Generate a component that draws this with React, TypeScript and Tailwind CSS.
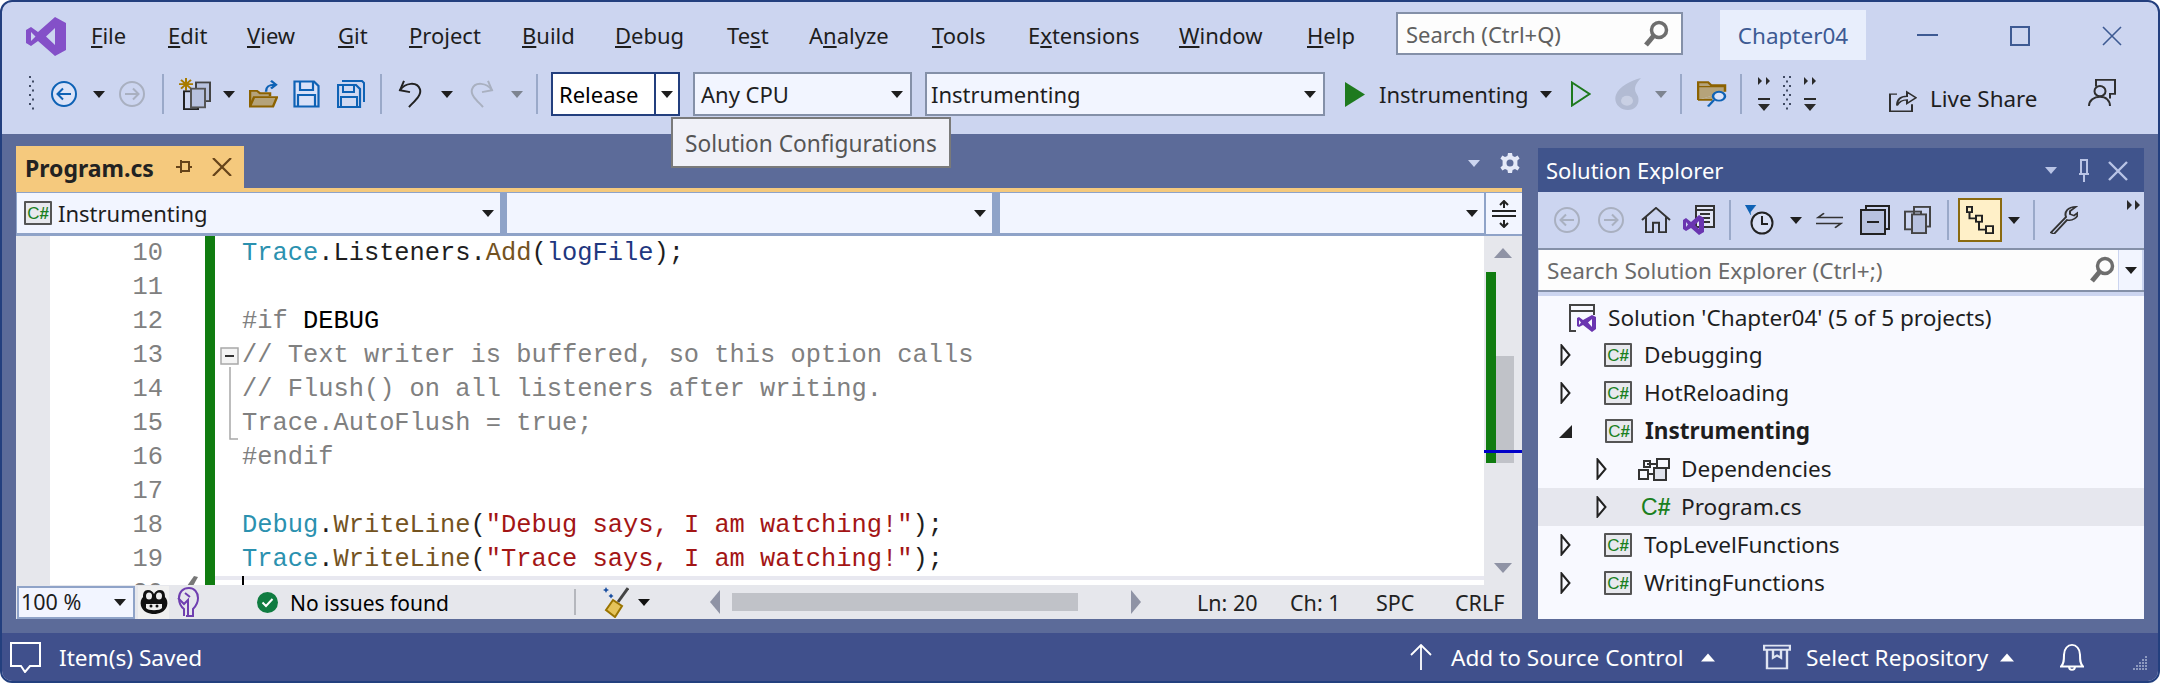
import React from "react";

const Caret = ({ c = "#1e1e1e", up = false }: { c?: string; up?: boolean }) => (
  <svg width="14" height="9" viewBox="0 0 14 9"><path d={up ? "M7 0.5L14 8.5H0Z" : "M1 1H13L7 8Z"} fill={c} /></svg>
);
const CircleArrow = ({ c, dir, f = "none" }: { c: string; dir: "l" | "r"; f?: string }) => (
  <svg width="26" height="26" viewBox="0 0 26 26" fill={f} stroke={c} strokeWidth="2">
    <circle cx="13" cy="13" r="12" />
    <path d={dir === "l" ? "M20 13H7M12 7.5L6.5 13L12 18.5" : "M6 13H19M14 7.5L19.5 13L14 18.5"} fill="none" />
  </svg>
);
const Sep = ({ cls }: { cls: string }) => <div className={`w-[2px] shrink-0 bg-[#9aa9c9] ${cls}`} />;
const Grip = ({ cols = 2, rows = 8 }: { cols?: number; rows?: number }) => (
  <svg width={cols * 3 + 1} height={rows * 4.5} viewBox={`0 0 ${cols * 3 + 1} ${rows * 4.5}`}>
    {Array.from({ length: rows }).map((_, r) =>
      Array.from({ length: cols }).map((_, c) =>
        (r + c) % 2 === 0 ? <rect key={`${r}-${c}`} x={c * 3 + 1} y={r * 4.5} width="2" height="2" fill="#3f4a63" /> : null
      )
    )}
  </svg>
);
const Vs = ({ size = 40, c = "#8450c8" }: { size?: number; c?: string }) => (
  <svg width={size} height={size} viewBox="0 0 40 40">
    <path fillRule="evenodd" fill={c} d="M29 0L40 6V33L29 39L12 24L5 29L0 26V13L5 10L12 15ZM29 11L20 19.5L29 28ZM5 15V24L9.5 19.5Z" />
  </svg>
);
const Search = ({ c = "#6e6e6e" }: { c?: string }) => (
  <svg width="26" height="28" viewBox="0 0 26 28" fill="none">
    <circle cx="16" cy="10" r="7.5" stroke={c} strokeWidth="3.5" />
    <path d="M10.5 16L3 25" stroke={c} strokeWidth="5" />
  </svg>
);
const Cs = () => (
  <div className="flex h-[24px] w-[28px] shrink-0 items-center justify-center rounded-[1px] border-2 border-[#555] bg-[#e8e9ee] font-['Liberation_Sans',sans-serif] text-[17px] leading-none text-[#1a8020]">
    C<span className="font-bold">#</span>
  </div>
);
const Tri = () => (
  <svg width="11" height="22" viewBox="0 0 11 22"><path d="M1.5 1.5L9.5 11L1.5 20.5Z" fill="#f8f9ff" stroke="#222" strokeWidth="2" /></svg>
);

const menu: [string, string, string, string][] = [
  ["", "F", "ile", "w-[77px]"],
  ["", "E", "dit", "w-[79px]"],
  ["", "V", "iew", "w-[91px]"],
  ["", "G", "it", "w-[71px]"],
  ["", "P", "roject", "w-[113px]"],
  ["", "B", "uild", "w-[93px]"],
  ["", "D", "ebug", "w-[112px]"],
  ["Te", "s", "t", "w-[82px]"],
  ["A", "n", "alyze", "w-[123px]"],
  ["", "T", "ools", "w-[96px]"],
  ["E", "x", "tensions", "w-[151px]"],
  ["", "W", "indow", "w-[128px]"],
  ["", "H", "elp", "w-[89px]"],
];

const T = "text-[#2b91af]";
const M = "text-[#74531f]";
const V = "text-[#1f377f]";
const S = "text-[#a31515]";
const K = "text-[#1e1e1e]";

const code: [string, React.ReactNode][] = [
  ["10", <><span className={T}>Trace</span><span className={K}>.Listeners.</span><span className={M}>Add</span><span className={K}>(</span><span className={V}>logFile</span><span className={K}>);</span></>],
  ["11", ""],
  ["12", <><span className="text-[#808080]">#if </span><span className="text-black">DEBUG</span></>],
  ["13", <span className="text-[#808080]">// Text writer is buffered, so this option calls</span>],
  ["14", <span className="text-[#808080]">// Flush() on all listeners after writing.</span>],
  ["15", <span className="text-[#808080]">Trace.AutoFlush = true;</span>],
  ["16", <span className="text-[#808080]">#endif</span>],
  ["17", ""],
  ["18", <><span className={T}>Debug</span><span className={K}>.</span><span className={M}>WriteLine</span><span className={K}>(</span><span className={S}>"Debug says, I am watching!"</span><span className={K}>);</span></>],
  ["19", <><span className={T}>Trace</span><span className={K}>.</span><span className={M}>WriteLine</span><span className={K}>(</span><span className={S}>"Trace says, I am watching!"</span><span className={K}>);</span></>],
];

const Row = ({ cls = "", arrow, icon, children }: { cls?: string; arrow: React.ReactNode; icon: React.ReactNode; children: React.ReactNode }) => (
  <div className={`flex h-[38px] items-center ${cls}`}>
    {arrow}
    {icon}
    {children}
  </div>
);

export default function App() {
  return (
    <div className="h-[683px] w-[2160px] overflow-hidden bg-white font-['Noto_Sans',sans-serif]">
      <div className="flex h-[683px] w-[2160px] flex-col overflow-hidden rounded-[12px] border-2 border-[#233f7e] bg-[#ccd5f0] text-[22px] text-[#1e1e1e]">
        {/* Menu row */}
        <div className="flex h-[66px] shrink-0 items-center">
          <div className="ml-[24px] mt-[4px] w-[65px] shrink-0"><Vs /></div>
          {menu.map(([a, u, b, w]) => (
            <div key={u + b} className={`shrink-0 ${w}`}>
              {a}<span className="underline underline-offset-2">{u}</span>{b}
            </div>
          ))}
          <div className="mb-[3px] flex h-[43px] w-[287px] shrink-0 items-center justify-between border-2 border-[#8490a8] bg-[#fdfdfd] pl-[8px] pr-[12px] text-[#606060]">
            <span className="pt-[2px]">Search (Ctrl+Q)</span>
            <Search />
          </div>
          <div className="ml-[37px] flex h-[50px] w-[146px] shrink-0 items-center justify-center bg-[#e8eefc] pt-[2px] text-[22.5px] text-[#3d5a93]">Chapter04</div>
          <div className="ml-[51px] h-[2px] w-[21px] shrink-0 bg-[#3d5a93]" />
          <div className="mt-[2px] ml-[72px] h-[20px] w-[20px] shrink-0 border-2 border-[#3d5a93]" />
          <svg className="mt-[2px] ml-[72px] shrink-0" width="20" height="20" viewBox="0 0 20 20" stroke="#3d5a93" strokeWidth="1.6"><path d="M1 1L19 19M19 1L1 19" /></svg>
        </div>

        {/* Tool row */}
        <div className="relative flex h-[66px] shrink-0 items-center pb-[14px]">
          <div className="ml-[26px] w-[6px] shrink-0"><Grip /></div>
          <div className="ml-[17px] shrink-0"><CircleArrow c="#0e62b5" dir="l" f="#dbe3f8" /></div>
          <div className="ml-[15px] shrink-0"><Caret /></div>
          <div className="ml-[13px] shrink-0"><CircleArrow c="#a9b0c0" dir="r" /></div>
          <Sep cls="ml-[17px] h-[40px]" />
          <svg className="ml-[15px] shrink-0" width="32" height="32" viewBox="0 0 32 36" preserveAspectRatio="none" fill="none">
            <path d="M7 0V14M0 7H14M2 2L12 12M12 2L2 12" stroke="#a87b00" strokeWidth="2" />
            <rect x="17" y="5" width="14" height="21" fill="#b8c2df" stroke="#444" strokeWidth="2" />
            <rect x="5" y="15" width="14" height="20" fill="none" stroke="#222" strokeWidth="2" />
            <rect x="12" y="12" width="14" height="21" fill="#b8c2df" stroke="#555" strokeWidth="2" />
          </svg>
          <div className="ml-[11px] shrink-0"><Caret /></div>
          <svg className="ml-[13px] shrink-0" width="29" height="28" viewBox="0 0 29 36" preserveAspectRatio="none" fill="none">
            <path d="M1 34V14H8L11 17H21V21" fill="#b5a37a" stroke="#8c6200" strokeWidth="2.5" />
            <path d="M1 34L5 22H28L24 34Z" fill="#b5a37a" stroke="#8c6200" strokeWidth="2.5" />
            <path d="M17 15C17 8 20 6 26 6M22 1L27 6L22 11" stroke="#0e62b5" strokeWidth="2.5" />
          </svg>
          <svg className="ml-[15px] shrink-0" width="27" height="28" viewBox="0 0 27 28" fill="none" stroke="#0e62b5" strokeWidth="2.2">
            <path d="M1.5 1.5H21L25.5 6V26.5H1.5Z" fill="#d9e1f8" />
            <path d="M7 1.5V10H20V1.5M5 26.5V15H22V26.5" />
          </svg>
          <svg className="ml-[17px] shrink-0" width="28" height="28" viewBox="0 0 28 28" fill="none" stroke="#0e62b5" strokeWidth="2">
            <path d="M5 1H25L27 3V22" />
            <path d="M1 5H19L23 9V27H1Z" fill="#d0d9f2" strokeWidth="2.2" />
            <path d="M6 5V12H17V5M4 27V17H20V27" />
          </svg>
          <Sep cls="ml-[15px] h-[40px]" />
          <svg className="ml-[16px] shrink-0" width="25" height="28" viewBox="0 0 25 30" preserveAspectRatio="none" fill="none" stroke="#222" strokeWidth="2">
            <path d="M6 1L2 11L12 13" />
            <path d="M2 11C7 3 19 1 22 10C24 17 15 24 11 29" />
          </svg>
          <div className="ml-[17px] shrink-0"><Caret /></div>
          <svg className="ml-[15px] shrink-0" width="25" height="28" viewBox="0 0 25 30" preserveAspectRatio="none" fill="none" stroke="#a9b0c0" strokeWidth="2">
            <path d="M19 1L23 11L13 13" />
            <path d="M23 11C18 3 6 1 3 10C1 17 10 24 14 29" />
          </svg>
          <div className="ml-[16px] shrink-0"><Caret c="#7d8490" /></div>
          <Sep cls="ml-[12px] h-[40px]" />
          <div className="ml-[13px] flex h-[44px] w-[129px] shrink-0 items-center border-2 border-[#233f7e] bg-white text-black">
            <span className="w-[101px] shrink-0 pl-[6px]">Release</span>
            <div className="flex h-full flex-1 items-center justify-center border-l-2 border-[#233f7e]"><Caret /></div>
          </div>
          <div className="ml-[13px] flex h-[44px] w-[219px] shrink-0 items-center justify-between border-2 border-[#8490a8] bg-[#f2f5ff] pl-[6px] pr-[6px]">
            <span>Any CPU</span><Caret />
          </div>
          <div className="ml-[13px] flex h-[44px] w-[400px] shrink-0 items-center justify-between border-2 border-[#8490a8] bg-[#f2f5ff] pl-[4px] pr-[6px]">
            <span>Instrumenting</span><Caret />
          </div>
          <svg className="ml-[20px] shrink-0" width="20" height="25" viewBox="0 0 20 25"><path d="M0 0L20 12.5L0 25Z" fill="#1e7a1e" /></svg>
          <span className="ml-[14px] w-[150px] shrink-0">Instrumenting</span>
          <div className="ml-[10px] shrink-0"><Caret /></div>
          <svg className="ml-[18px] shrink-0" width="20" height="26" viewBox="0 0 20 26"><path d="M1 1.5L18.5 13L1 24.5Z" fill="none" stroke="#1e7a1e" strokeWidth="2" /></svg>
          <svg className="ml-[23px] shrink-0" width="28" height="32" viewBox="0 0 28 38" preserveAspectRatio="none">
            <path d="M27 0C17 3 5 10 2 20C-1 30 6 38 14 38C22 38 26 30 24 22C23 19 21 17 21 13C21 8 24 4 27 0Z" fill="#b2bbd3" />
            <circle cx="13" cy="27" r="6" fill="#c9d0e4" />
          </svg>
          <div className="ml-[12px] shrink-0"><Caret c="#7d8490" /></div>
          <Sep cls="ml-[12px] h-[40px]" />
          <svg className="ml-[15px] shrink-0" width="30" height="28" viewBox="0 0 30 38" preserveAspectRatio="none" fill="none">
            <path d="M1 27V3H11L14 7H28V16" fill="#b5a37a" stroke="#8c6200" strokeWidth="2.5" />
            <path d="M1 27H16V16H28" fill="#b5a37a" />
            <path d="M1 27H15" stroke="#8c6200" strokeWidth="2.5" />
            <path d="M1 9H28" stroke="#8c6200" strokeWidth="2" />
            <circle cx="22" cy="22" r="6" stroke="#0e62b5" strokeWidth="2.5" fill="#dbe3f8" />
            <path d="M17 27L11 36" stroke="#0e62b5" strokeWidth="2.5" />
          </svg>
          <Sep cls="ml-[13px] h-[40px]" />
          <div className="ml-[16px] flex h-[36px] w-[58px] shrink-0 items-center justify-between">
            <svg width="12" height="36" viewBox="0 0 12 36"><path d="M0 1L4 5L0 9ZM8 1L12 5L8 9ZM0 22H12V24H0ZM0 28H12L6 35Z" fill="#2a2a2a" /></svg>
            <Grip cols={3} rows={8} />
            <svg width="12" height="36" viewBox="0 0 12 36"><path d="M0 1L4 5L0 9ZM8 1L12 5L8 9ZM0 22H12V24H0ZM0 28H12L6 35Z" fill="#2a2a2a" /></svg>
          </div>
          <svg className="ml-[73px] mt-[10px] shrink-0" width="28" height="25" viewBox="0 0 28 35" preserveAspectRatio="none" fill="none" stroke="#2f2f2f" strokeWidth="2">
            <path d="M8 10H1V34H23V24" />
            <path d="M8 26C8 16 12 13 18 13V7L27 15L18 23V18C13 18 10 21 8 26Z" fill="#ccd5f0" />
          </svg>
          <span className="ml-[13px] mt-[10px] w-[107px] shrink-0 whitespace-nowrap text-[22.4px]">Live Share</span>
          <svg className="ml-[51px] mt-[-2px] shrink-0" width="28" height="28" viewBox="0 0 28 30" preserveAspectRatio="none" fill="none" stroke="#2f2f2f" strokeWidth="2">
            <path d="M8 8V1H27V16H22V21" />
            <circle cx="12" cy="13" r="5.5" fill="#ccd5f0" />
            <path d="M1 29C1 23 6 19 12 19C18 19 22 23 22 29" fill="#ccd5f0" />
          </svg>

          {/* Tooltip */}
          <div className="absolute left-[669px] top-[49px] z-10 flex h-[51px] w-[280px] items-center border-2 border-[#7a7a7a] bg-[#f0f1f8] pl-[12px] pt-[3px] text-[22.7px] text-[#555]">
            Solution Configurations
          </div>
        </div>

        {/* Main */}
        <div className="flex h-[499px] shrink-0 gap-[16px] bg-[#5c6b99] pl-[14px] pr-[14px]">
          {/* Editor column */}
          <div className="flex h-full w-[1506px] shrink-0 flex-col pt-[12px]">
            <div className="flex h-[42px] shrink-0 items-stretch">
              <div className="flex w-[228px] items-center bg-[#f5c97d] pl-[9px] text-[23px] font-bold text-[#222]">
                <span className="w-[142px] shrink-0 pt-[3px]">Program.cs</span>
                <svg className="ml-[9px] shrink-0" width="16" height="16" viewBox="0 0 16 16" fill="none" stroke="#66441a" strokeWidth="2">
                  <path d="M0 8H5M5 3H13V12H5ZM13 8H16M5 1V14" />
                </svg>
                <svg className="ml-[20px] shrink-0" width="20" height="18" viewBox="0 0 20 18" stroke="#66441a" strokeWidth="2.2"><path d="M1 0L19 18M19 0L1 18" /></svg>
              </div>
              <div className="ml-auto flex items-center pb-[8px]">
                <Caret c="#ccd5f0" />
                <svg className="ml-[19px] mr-[2px]" width="20" height="20" viewBox="0 0 20 20">
                  <path fillRule="evenodd" fill="#e4e9f8" d="M8 0H12L12.6 3L15 4L17.6 2.4L19.6 5.4L17.4 7.6V12.4L19.6 14.6L17.6 17.6L15 16L12.6 17L12 20H8L7.4 17L5 16L2.4 17.6L.4 14.6L2.6 12.4V7.6L.4 5.4L2.4 2.4L5 4L7.4 3ZM10 6.5A3.5 3.5 0 1 0 10 13.5A3.5 3.5 0 1 0 10 6.5Z" />
                </svg>
              </div>
            </div>
            <div className="h-[4px] shrink-0 bg-[#f5c97d]" />
            <div className="flex h-[44px] shrink-0 bg-[#8fa3c8] pt-[1px]">
              <div className="ml-[1px] flex h-[40px] w-[483px] shrink-0 items-center bg-[#f2f5ff] pl-[7px] pr-[5px]">
                <Cs />
                <span className="ml-[6px] flex-1 pt-[1px]">Instrumenting</span>
                <Caret />
              </div>
              <div className="ml-[7px] flex h-[40px] w-[485px] shrink-0 items-center justify-end bg-[#f2f5ff] pr-[5px]"><Caret /></div>
              <div className="ml-[8px] flex h-[40px] w-[484px] shrink-0 items-center justify-end bg-[#f2f5ff] pr-[5px]"><Caret /></div>
              <div className="ml-[2px] flex h-[41px] w-[36px] shrink-0 items-center justify-center bg-[#f2f5ff]">
                <svg width="24" height="28" viewBox="0 0 24 28" fill="none" stroke="#222" strokeWidth="2">
                  <path d="M0 11H24M0 16H24M12 1V8M8 5L12 1L16 5M12 20V27M8 23L12 27L16 23" />
                </svg>
              </div>
            </div>
            {/* Editor body */}
            <div className="flex h-[349px] shrink-0 overflow-hidden bg-white font-['Liberation_Mono',monospace] text-[25.4px]">
              <div className="w-[34px] shrink-0 bg-[#e6e7ec]" />
              <div className="relative flex-1 overflow-hidden">
                <div className="absolute left-[155px] top-0 h-full w-[10px] bg-[#107c10]" />
                <svg className="absolute left-[170px] top-[111px]" width="19" height="94" viewBox="0 0 19 94" fill="none" stroke="#a8a8a8" strokeWidth="1.5">
                  <rect x="1" y="1" width="17" height="16" fill="#f4f4f4" />
                  <path d="M5 9H14" stroke="#333" strokeWidth="2" />
                  <path d="M10 20V92H18" />
                </svg>
                {code.map(([n, c]) => (
                  <div key={n} className="flex h-[34px] items-center whitespace-pre pt-[3px]">
                    <span className="w-[113px] shrink-0 text-right text-[#808080]">{n}</span>
                    <span className="ml-[79px]">{c}</span>
                  </div>
                ))}
                <div className="relative flex h-[34px] items-center pt-[3px]">
                  <span className="w-[113px] shrink-0 text-right text-[#808080]">20</span>
                  <div className="absolute left-[165px] right-0 top-0 h-[4px] bg-[#e8e8f0]" />
                  <div className="absolute left-[192px] top-0 h-[20px] w-[2px] bg-black" />
                  <svg className="absolute left-[137px] top-0" width="11" height="10" viewBox="0 0 11 10"><path d="M7 0L11 1L6 10H0Z" fill="#777" /></svg>
                </div>
              </div>
              <div className="relative w-[38px] shrink-0 bg-[#e6e7ec]">
                <svg className="ml-[10px] mt-[12px]" width="18" height="10" viewBox="0 0 18 10"><path d="M9 0L18 10H0Z" fill="#8f93a5" /></svg>
                <div className="ml-[2px] mt-[14px] flex">
                  <div className="h-[191px] w-[10px] bg-[#107c10]" />
                  <div className="mt-[84px] h-[107px] w-[18px] bg-[#c0c2c8]" />
                </div>
                <div className="absolute left-0 right-0 top-[214px] h-[3px] bg-[#0000c8]" />
                <svg className="absolute left-[10px] top-[327px]" width="18" height="10" viewBox="0 0 18 10"><path d="M0 0H18L9 10Z" fill="#8f93a5" /></svg>
              </div>
            </div>
            {/* Editor status */}
            <div className="flex h-[34px] shrink-0 items-center bg-[#e6e7ec] text-[21.5px] leading-none">
              <div className="ml-[1px] flex h-[33px] w-[118px] shrink-0 items-center justify-between border-2 border-[#8fa3c8] bg-[#f2f5ff] pl-[2px] pr-[6px]">
                <span>100 %</span><Caret />
              </div>
              <div className="ml-[3px] flex h-[33px] w-[31px] shrink-0 items-center justify-center bg-[#f0f0f0]">
                <svg width="28" height="26" viewBox="0 0 28 26">
                  <path d="M8 1C4 1 3 4 3 8C1 10 0 13 1 17C3 23 9 25 14 25C19 25 25 23 27 17C28 13 27 10 25 8C25 4 24 1 20 1C17 1 15 3 14 5C13 3 11 1 8 1Z" fill="#111" />
                  <ellipse cx="9" cy="7" rx="3" ry="3.5" fill="#eee" />
                  <ellipse cx="19" cy="7" rx="3" ry="3.5" fill="#eee" />
                  <path d="M6 15H22V19C20 22 8 22 6 19Z" fill="#eee" />
                  <circle cx="11" cy="17" r="1.5" fill="#111" />
                  <circle cx="17" cy="17" r="1.5" fill="#111" />
                </svg>
              </div>
              <svg className="ml-[8px] shrink-0" width="22" height="32" viewBox="0 0 22 32" fill="none" stroke="#6f3fb0" strokeWidth="2">
                <path d="M7 30V23C3 20 2 16 2 12C2 6 6 2 12 2C17 2 21 6 21 12C21 16 19 20 16 23V30H9" />
                <path d="M1 12L7 18L11 14L11 30M8 7L13 11" />
              </svg>
              <svg className="ml-[58px] shrink-0" width="21" height="21" viewBox="0 0 21 21">
                <circle cx="10.5" cy="10.5" r="10.5" fill="#107c41" />
                <path d="M5.5 10.5L9 14L15.5 7" fill="none" stroke="#fff" strokeWidth="2" />
              </svg>
              <span className="ml-[12px] w-[284px] shrink-0 whitespace-nowrap pt-[2px] text-[21px] text-black">No issues found</span>
              <div className="h-[26px] w-[2px] shrink-0 bg-[#b5b7bd]" />
              <svg className="ml-[27px] shrink-0" width="26" height="32" viewBox="0 0 26 32" fill="none">
                <path d="M2 3L3 1L4 3L6 4L4 5L3 7L2 5L0 4ZM7 9L8 7.5L9 9L10.5 10L9 11L8 12.5L7 11L5.5 10Z" fill="#1a4fa0" />
                <path d="M25 2L15 16" stroke="#444" strokeWidth="3" />
                <path d="M10 14L19 20L12 31L3 24Z" fill="#e5c35a" stroke="#9a7400" strokeWidth="2" />
              </svg>
              <div className="ml-[8px] shrink-0"><Caret c="#111" /></div>
              <svg className="ml-[59px] shrink-0" width="10" height="24" viewBox="0 0 10 24"><path d="M10 0V24L0 12Z" fill="#8f93a5" /></svg>
              <div className="ml-[12px] h-[18px] w-[346px] shrink-0 bg-[#c0c2c8]" />
              <svg className="ml-[53px] shrink-0" width="10" height="24" viewBox="0 0 10 24"><path d="M0 0V24L10 12Z" fill="#8f93a5" /></svg>
              <span className="ml-[56px] w-[93px] shrink-0 pt-[2px] text-[#222]">Ln: 20</span>
              <span className="w-[86px] shrink-0 pt-[2px] text-[#222]">Ch: 1</span>
              <span className="w-[79px] shrink-0 pt-[2px] text-[#222]">SPC</span>
              <span className="shrink-0 pt-[2px] text-[#222]">CRLF</span>
            </div>
          </div>

          {/* Solution Explorer */}
          <div className="flex h-full w-[606px] shrink-0 flex-col pb-[14px] pt-[14px]">
            <div className="flex h-[44px] shrink-0 items-center bg-[#40548c] pl-[8px] pt-[1px] text-white">
              <span className="w-[498px] shrink-0">Solution Explorer</span>
              <Caret c="#b9c4e6" />
              <svg className="ml-[20px]" width="12" height="24" viewBox="0 0 12 24" fill="none" stroke="#b9c4e6" strokeWidth="2"><path d="M1 15H11M3 1H9V15H3ZM6 15V23" /></svg>
              <svg className="ml-[18px]" width="20" height="20" viewBox="0 0 20 20" stroke="#b9c4e6" strokeWidth="2.4"><path d="M1 1L19 19M19 1L1 19" /></svg>
            </div>
            <div className="flex h-[56px] shrink-0 items-center bg-[#ccd5f0]">
              <div className="ml-[16px] shrink-0"><CircleArrow c="#a9b0c0" dir="l" /></div>
              <div className="ml-[18px] shrink-0"><CircleArrow c="#a9b0c0" dir="r" /></div>
              <svg className="ml-[17px] shrink-0" width="30" height="26" viewBox="0 0 30 28" preserveAspectRatio="none" fill="none" stroke="#333" strokeWidth="2"><path d="M1 14L15 1L29 14M5 11V27H12V17H18V27H25V11" /></svg>
              <svg className="ml-[12px] shrink-0" width="32" height="30" viewBox="0 0 32 30" fill="none">
                <rect x="13" y="1" width="18" height="21" fill="#e2e6f5" stroke="#333" strokeWidth="2" />
                <path d="M13 5H31M17 9H27M17 13H27M17 17H27" stroke="#333" strokeWidth="2" />
                <path fillRule="evenodd" fill="#6a35b0" d="M16 10L21 13V27L16 30L8 23L3 26L0 24V15L3 13L8 17ZM16 16L12 20L16 24ZM3 17V22L5 19.5Z" />
              </svg>
              <Sep cls="ml-[14px] h-[40px]" />
              <svg className="ml-[14px] shrink-0" width="29" height="30" viewBox="0 0 29 30" fill="none">
                <path d="M0 0H11L5.5 7V10" fill="#0e62b5" stroke="#0e62b5" strokeWidth="0.5" />
                <circle cx="17" cy="18" r="10.5" fill="#d9e0f5" stroke="#222" strokeWidth="2" />
                <path d="M17 11V19H23" stroke="#222" strokeWidth="2" />
              </svg>
              <div className="ml-[15px] shrink-0"><Caret /></div>
              <svg className="ml-[13px] shrink-0" width="27" height="19" viewBox="0 0 27 26" preserveAspectRatio="none" fill="none" stroke="#333" strokeWidth="2"><path d="M27 9H2L8 3M0 17H25L19 23" /></svg>
              <svg className="ml-[17px] shrink-0" width="30" height="30" viewBox="0 0 30 30" fill="none" stroke="#222" strokeWidth="2">
                <path d="M6 5V1H29V24H25" />
                <rect x="1" y="5" width="24" height="24" fill="#b8c2df" />
                <path d="M7 17H19" />
              </svg>
              <svg className="ml-[14px] shrink-0" width="27" height="28" viewBox="0 0 27 30" preserveAspectRatio="none" fill="none" stroke="#444" strokeWidth="2">
                <rect x="10" y="1" width="16" height="21" />
                <rect x="1" y="6" width="16" height="19" />
                <rect x="8" y="9" width="14" height="20" fill="#b8c2df" />
              </svg>
              <Sep cls="ml-[16px] h-[40px]" />
              <div className="ml-[9px] flex h-[44px] w-[44px] shrink-0 items-center justify-center border-2 border-[#8a6a10] bg-[#fff0c8]">
                <svg width="28" height="28" viewBox="0 0 28 32" preserveAspectRatio="none" fill="none" stroke="#222" strokeWidth="2">
                  <rect x="1" y="1" width="5" height="6" />
                  <rect x="10" y="11" width="6" height="7" />
                  <rect x="20" y="23" width="7" height="8" />
                  <path d="M3.5 7V14H10M13 18V27H20" />
                </svg>
              </div>
              <div className="ml-[5px] shrink-0"><Caret /></div>
              <Sep cls="ml-[12px] h-[40px]" />
              <svg className="ml-[15px] shrink-0" width="28" height="28" viewBox="0 0 28 38" preserveAspectRatio="none" fill="none">
                <path d="M1 36L16 15C14 8 18 1 26 1L20 7V11L24 13L28 9C28 16 22 21 17 19L4 38Z" fill="#ccd5f0" stroke="#333" strokeWidth="2" />
              </svg>
              <svg className="mb-[30px] ml-[49px] shrink-0" width="13" height="10" viewBox="0 0 13 10"><path d="M0 0L5 5L0 10ZM8 0L13 5L8 10Z" fill="#2a2a2a" /></svg>
            </div>
            <div className="flex h-[44px] shrink-0 items-stretch border-y-2 border-[#8490a8] bg-[#ccd5f0] pl-[1px] pr-[2px]">
              <div className="flex w-[579px] shrink-0 items-center justify-between bg-[#fdfdfd] pl-[8px] pr-[3px] text-[22.6px] text-[#6a6a6a]">
                <span className="pt-[2px]">Search Solution Explorer (Ctrl+;)</span>
                <Search />
              </div>
              <div className="ml-[1px] flex flex-1 items-center justify-center bg-[#f2f5ff]"><Caret /></div>
            </div>
            <div className="h-[4px] shrink-0 bg-[#ccd5f0]" />
            <div className="flex-1 bg-[#f8f9ff] pt-[2px] text-[22.6px]">
              <Row arrow={null} icon={
                <svg className="ml-[30px] shrink-0" width="29" height="29" viewBox="0 0 29 29" fill="none">
                  <path d="M8 28H2V2H26V12M2 8H26" stroke="#444" strokeWidth="2" />
                  <path fillRule="evenodd" fill="#6a35b0" d="M24 12L28 14V26L24 29L15 22L11 24L9 23V15L11 14L15 17ZM24 16L20 19.5L24 24ZM11 17V22L13 19.5Z" />
                </svg>
              }>
                <span className="ml-[11px] pt-[1px]">Solution 'Chapter04' (5 of 5 projects)</span>
              </Row>
              <Row arrow={<div className="ml-[22px] w-[11px] shrink-0"><Tri /></div>} icon={<div className="ml-[33px]"><Cs /></div>}><span className="ml-[12px]">Debugging</span></Row>
              <Row arrow={<div className="ml-[22px] w-[11px] shrink-0"><Tri /></div>} icon={<div className="ml-[33px]"><Cs /></div>}><span className="ml-[12px]">HotReloading</span></Row>
              <Row arrow={<svg className="ml-[21px] shrink-0" width="13" height="13" viewBox="0 0 13 13"><path d="M13 0V13H0Z" fill="#222" /></svg>} icon={<div className="ml-[33px]"><Cs /></div>}><span className="ml-[12px] font-bold">Instrumenting</span></Row>
              <Row arrow={<div className="ml-[58px] w-[11px] shrink-0"><Tri /></div>} icon={
                <svg className="ml-[31px] shrink-0" width="32" height="24" viewBox="0 0 32 24" fill="none" stroke="#333" strokeWidth="2">
                  <rect x="19" y="2" width="12" height="9" />
                  <rect x="6" y="4" width="6" height="6" />
                  <rect x="16" y="11" width="12" height="12" fill="#dfe2ec" />
                  <rect x="1" y="13" width="9" height="9" />
                  <path d="M9 7H19M10 17H16" />
                </svg>
              }><span className="ml-[11px]">Dependencies</span></Row>
              <Row cls="bg-[#e6e7ee]" arrow={<div className="ml-[58px] w-[11px] shrink-0"><Tri /></div>} icon={
                <span className="ml-[34px] w-[29px] shrink-0 font-['Liberation_Sans',sans-serif] text-[23px] leading-none text-[#1a8020]">C<span className="font-bold">#</span></span>
              }><span className="ml-[11px]">Program.cs</span></Row>
              <Row arrow={<div className="ml-[22px] w-[11px] shrink-0"><Tri /></div>} icon={<div className="ml-[33px]"><Cs /></div>}><span className="ml-[12px]">TopLevelFunctions</span></Row>
              <Row arrow={<div className="ml-[22px] w-[11px] shrink-0"><Tri /></div>} icon={<div className="ml-[33px]"><Cs /></div>}><span className="ml-[12px]">WritingFunctions</span></Row>
            </div>
          </div>
        </div>

        {/* Status bar */}
        <div className="flex flex-1 items-center bg-[#40508c] text-[22.6px] text-white">
          <svg className="ml-[8px] shrink-0" width="31" height="31" viewBox="0 0 31 31" fill="none" stroke="#fff" strokeWidth="2"><path d="M1 1H30V24H20L15 30L11 24H1Z" /></svg>
          <span className="ml-[18px] w-[1351px] shrink-0 whitespace-nowrap pt-[2px]">Item(s) Saved</span>
          <svg className="shrink-0" width="22" height="26" viewBox="0 0 22 26" fill="none" stroke="#fff" strokeWidth="1.8"><path d="M11 26V1M1 11L11 1L21 11" /></svg>
          <span className="ml-[19px] w-[250px] shrink-0 whitespace-nowrap pt-[2px]">Add to Source Control</span>
          <Caret c="#fff" up />
          <svg className="ml-[48px] shrink-0" width="28" height="26" viewBox="0 0 28 32" preserveAspectRatio="none" fill="none" stroke="#dfe4f2" strokeWidth="2.4">
            <path d="M1 2H27V7H1ZM4 7V30H24V7M10 7V17L14 14L18 17V7" />
          </svg>
          <span className="ml-[15px] w-[194px] shrink-0 whitespace-nowrap pt-[2px]">Select Repository</span>
          <Caret c="#fff" up />
          <svg className="ml-[46px] shrink-0" width="24" height="27" viewBox="0 0 24 30" preserveAspectRatio="none" fill="none" stroke="#fff" strokeWidth="2">
            <path d="M1 25C4 22 4 18 4 12C4 5 8 1 12 1C16 1 20 5 20 12C20 18 20 22 23 25ZM9 25C9 30 15 30 15 25" />
          </svg>
          <svg className="ml-[48px] mt-[12px] shrink-0" width="16" height="16" viewBox="0 0 16 16" fill="#8e9ac0">
            <path d="M13 1h2v2h-2zM10 4h2v2h-2zM13 4h2v2h-2zM7 7h2v2H7zM10 7h2v2h-2zM13 7h2v2h-2zM4 10h2v2H4zM7 10h2v2H7zM10 10h2v2h-2zM13 10h2v2h-2zM1 13h2v2H1zM4 13h2v2H4zM7 13h2v2H7zM10 13h2v2h-2zM13 13h2v2h-2z" />
          </svg>
        </div>
      </div>
    </div>
  );
}
